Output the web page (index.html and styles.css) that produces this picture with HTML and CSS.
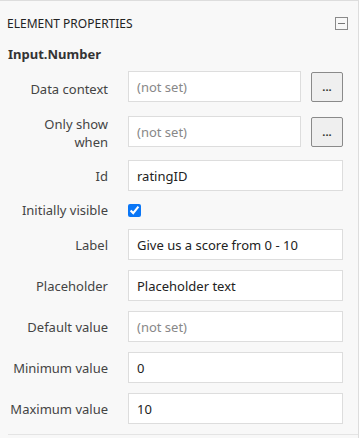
FILE: index.html
```html
<!DOCTYPE html>
<html lang="en">
<head>
  <meta charset="UTF-8">
  <meta name="viewport" content="width=device-width, initial-scale=1.0">
  <title>Element Properties</title>
  <link rel="stylesheet" href="styles.css">
</head>
<body>
  <div class="panel">
    <!-- Panel header -->
    <div class="panel-header">
      <span class="panel-title">ELEMENT PROPERTIES</span>
      <button class="collapse" title="Collapse"></button>
    </div>

    <div class="element-type">Input.Number</div>

    <!-- Property grid -->
    <div class="props">
      <label class="prop-label" for="dataContext">Data context</label>
      <div class="prop-field with-btn">
        <input type="text" id="dataContext" placeholder="(not set)">
        <button class="more">...</button>
      </div>

      <label class="prop-label two-line" for="onlyShow">Only show when</label>
      <div class="prop-field with-btn2">
        <input type="text" id="onlyShow" placeholder="(not set)">
        <button class="more">...</button>
      </div>

      <label class="prop-label" for="elementId">Id</label>
      <div class="prop-field">
        <input type="text" id="elementId" value="ratingID">
      </div>

      <label class="prop-label" for="visible">Initially visible</label>
      <div class="prop-field check">
        <input type="checkbox" id="visible" checked>
      </div>

      <label class="prop-label" for="label">Label</label>
      <div class="prop-field">
        <input type="text" id="label" value="Give us a score from 0 - 10">
      </div>

      <label class="prop-label" for="placeholder">Placeholder</label>
      <div class="prop-field">
        <input type="text" id="placeholder" value="Placeholder text">
      </div>

      <label class="prop-label" for="defaultValue">Default value</label>
      <div class="prop-field">
        <input type="text" id="defaultValue" placeholder="(not set)">
      </div>

      <label class="prop-label" for="minValue">Minimum value</label>
      <div class="prop-field">
        <input type="text" id="minValue" value="0">
      </div>

      <label class="prop-label" for="maxValue">Maximum value</label>
      <div class="prop-field">
        <input type="text" id="maxValue" value="10">
      </div>
    </div>
  </div>
</body>
</html>
```

FILE: styles.css
```css
body {
  margin: 0;
  background: #fff;
  font-family: "Noto Sans", "Open Sans", sans-serif;
  color: #333;
}
.panel {
  width: 359px;
  height: 438px;
  box-sizing: border-box;
  background: #f8f8f8;
  border-top: 1px solid #ddd;
  border-right: 1px solid #ddd;
}
.panel-header {
  display: flex;
  justify-content: space-between;
  align-items: center;
  padding: 10px 10px 0 7px;
  height: 24px;
}
.panel-title {
  font-size: 12px;
  color: #222;
}
.collapse {
  width: 13px;
  height: 13px;
  padding: 0;
  border: 1px solid #8a8a8a;
  background: #f8f8f8;
  position: relative;
}
.collapse::after {
  content: "";
  position: absolute;
  left: 2px;
  right: 2px;
  top: 5px;
  border-top: 1px solid #777;
}
.element-type {
  font-size: 13px;
  font-weight: bold;
  color: #333;
  padding: 10px 0 0 8px;
  height: 26px;
}
.props {
  display: grid;
  grid-template-columns: 100px minmax(0, 1fr);
  column-gap: 20px;
  row-gap: 10px;
  align-items: start;
  margin-left: 8px;
  padding: 0 15px 10px 0;
  border-bottom: 1px solid #e4e4e4;
}
.prop-label {
  align-self: center;
  text-align: right;
  font-size: 13px;
  line-height: 18px;
  color: #444;
}
.two-line {
  margin: -3px 0 -2px;
}
.prop-field {
  display: flex;
  gap: 10px;
  align-items: center;
  min-width: 0;
}
.with-btn {
  padding-bottom: 4px;
}
.with-btn2 {
  padding-bottom: 3px;
}
.prop-field input[type="text"] {
  flex: 1;
  width: 0;
  min-width: 0;
  height: 31px;
  box-sizing: border-box;
  border: 1px solid #ddd;
  background: #fff;
  padding: 0 8px;
  font-family: inherit;
  font-size: 13px;
  color: #222;
  outline: none;
}
.prop-field input::placeholder {
  color: #888;
}
.more {
  flex: none;
  width: 32px;
  height: 30px;
  box-sizing: border-box;
  border: 1px solid #8a8a8a;
  border-radius: 2px;
  background: #efefef;
  font-family: inherit;
  font-size: 11px;
  font-weight: bold;
  color: #333;
  padding: 0;
}
.check {
  height: 17px;
  align-self: center;
}
.check input {
  margin: 0;
  width: 13px;
  height: 13px;
  accent-color: #0a76f6;
}
```
